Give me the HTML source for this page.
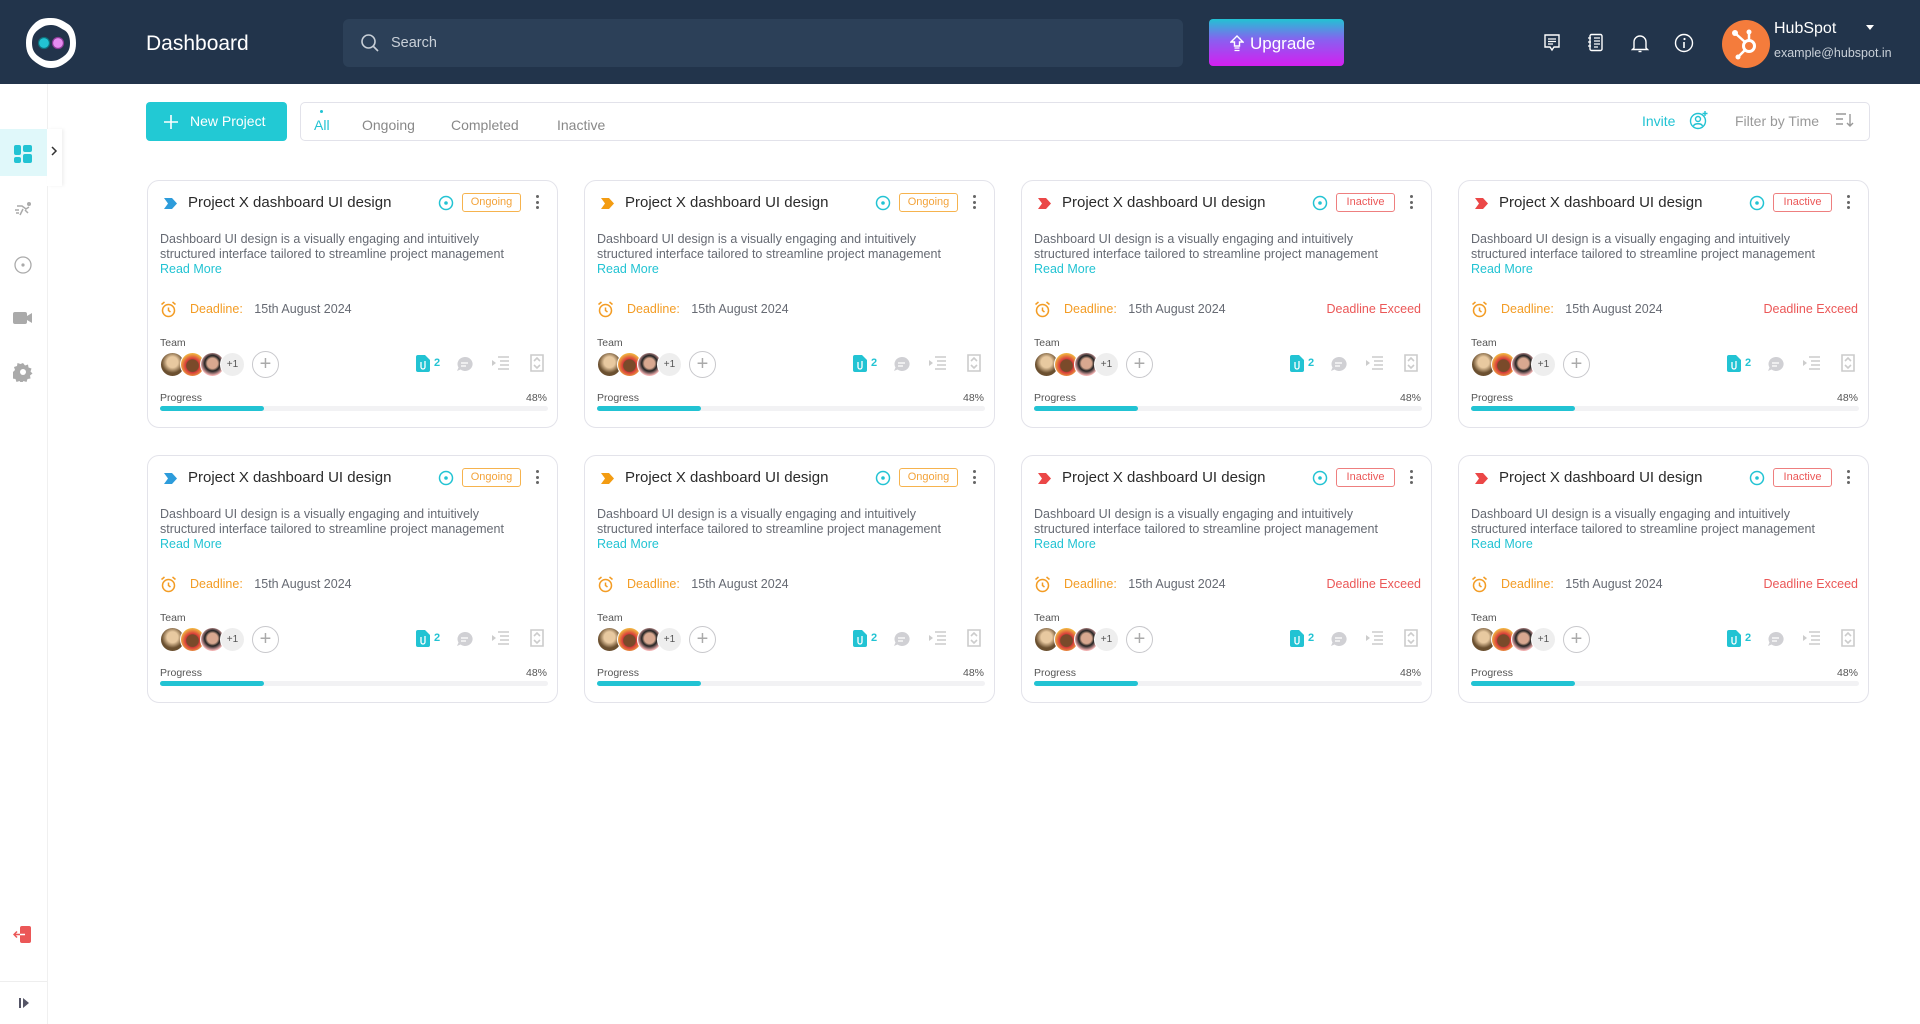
<!DOCTYPE html>
<html><head><meta charset="utf-8"><style>
*{box-sizing:border-box;margin:0;padding:0}
body{width:1920px;height:1024px;background:#fff;font-family:"Liberation Sans",sans-serif;position:relative;overflow:hidden;color:#333}
.hdr{position:absolute;left:0;top:0;width:1920px;height:84px;background:#22344b}
.abs{position:absolute}
.side{position:absolute;left:0;top:84px;width:48px;height:940px;background:#fff;border-right:1px solid #f0f0f0}
.card{position:absolute;width:411px;height:248px;border:1px solid #e3e3ea;border-radius:12px;background:#fff}
.card .t{position:absolute;left:40px;top:12px;font-size:15px;color:#2a2a2a;line-height:20px}
.card .chev{position:absolute;left:16px;top:17px}
.card .tg{position:absolute;left:290px;top:14px}
.badge{position:absolute;left:314px;top:12px;width:59px;height:19px;border:1px solid;border-radius:3px;font-size:11px;text-align:center;line-height:17px}
.og{border-color:#f6b34e;color:#f3a33a}
.in{border-color:#ee7f7f;color:#eb5757}
.keb{position:absolute;left:388px;top:14px;width:4px}
.keb i{display:block;width:3px;height:3px;border-radius:50%;background:#666;margin-bottom:2.5px}
.desc{position:absolute;left:12px;top:51px;font-size:12.5px;line-height:15px;color:#666a73;width:365px}
.rm{color:#22c3d3}
.dl{position:absolute;left:12px;top:119px;font-size:12.5px;line-height:18px;color:#666a73}
.dl b{font-weight:normal;color:#f39c24;margin-left:16px;margin-right:8px}
.ex{position:absolute;right:10px;top:119px;font-size:12.5px;line-height:18px;color:#eb5757}
.team{position:absolute;left:12px;top:156px;font-size:10.5px;color:#555}
.av{position:absolute;top:171px;width:25px;height:25px;border-radius:50%;border:1px solid #fff}
.plus{position:absolute;left:104px;top:170px;width:27px;height:27px;border-radius:50%;border:1px solid #c8c8cc;color:#aaa;font-size:20px;text-align:center;line-height:24px}
.pl{position:absolute;left:12px;top:211px;font-size:10.5px;color:#555}
.pc{position:absolute;right:10px;top:211px;font-size:10.5px;color:#555}
.bar{position:absolute;left:12px;top:225px;width:388px;height:5px;background:#f2f2f4;border-radius:3px}
.bar i{display:block;width:104px;height:5px;background:#22c3d3;border-radius:3px}
.ic{position:absolute;top:175px}
</style></head><body>
<div class="hdr">
 <svg class="abs" style="left:24px;top:16px" width="54" height="54" viewBox="0 0 54 54"><path d="M27 2c8 0 12 3 17 6s8 10 8 19-3 14-8 18-10 7-17 7-12-3-17-7-8-9-8-18 3-14 8-19 9-6 17-6z" fill="#fff"/><path d="M27 9c6 0 9 3 13 5s6 7 6 13-2 10-6 13-7 5-13 5-9-2-13-5-6-7-6-13 2-10 6-13 7-5 13-5z" fill="#22344b"/><circle cx="20" cy="27" r="5.5" fill="#22c3d3" stroke="#0f6f7b" stroke-width="1.2"/><circle cx="34" cy="27" r="5.5" fill="#e58cf0" stroke="#8a3a95" stroke-width="1.2"/></svg>
 <div class="abs" style="left:146px;top:32px;font-size:21px;color:#fff">Dashboard</div>
 <div class="abs" style="left:343px;top:19px;width:840px;height:48px;background:#2c4058;border-radius:6px"></div>
 <svg class="abs" style="left:360px;top:33px" width="20" height="20" viewBox="0 0 20 20"><circle cx="8.5" cy="8.5" r="6.5" fill="none" stroke="#c9d0d8" stroke-width="1.6"/><path d="M13.5 13.5l4.5 4.5" stroke="#c9d0d8" stroke-width="1.6"/></svg>
 <div class="abs" style="left:391px;top:35px;font-size:14.5px;color:#c9d0d8">Search</div>
 <div class="abs" style="left:1209px;top:19px;width:135px;height:47px;border-radius:4px;background:linear-gradient(#22c3d3,#8a5ff0 45%,#d41ff0)"></div>
 <svg class="abs" style="left:1230px;top:35px" width="14" height="17" viewBox="0 0 14 17"><path d="M7 1L1 7h3.5v4h5V7H13z" fill="none" stroke="#fff" stroke-width="1.4"/><path d="M4.5 13h5M4.5 15.5h5" stroke="#fff" stroke-width="1.2"/></svg>
 <div class="abs" style="left:1250px;top:34px;font-size:17px;color:#fff">Upgrade</div>
 <svg class="abs" style="left:1543px;top:33px" width="18" height="20" viewBox="0 0 18 20"><path d="M2 2h14v12h-5l-2 3-2-3H2z" fill="none" stroke="#fff" stroke-width="1.4"/><path d="M5 6h8M5 8.5h8M5 11h5" stroke="#fff" stroke-width="1.2"/></svg>
 <svg class="abs" style="left:1587px;top:33px" width="18" height="20" viewBox="0 0 18 20"><rect x="3" y="1.5" width="12" height="16" rx="1.5" fill="none" stroke="#fff" stroke-width="1.4"/><path d="M7 5h6M7 8h6M7 11h6M7 14h4M1 5h3M1 9h3M1 13h3" stroke="#fff" stroke-width="1.2"/></svg>
 <svg class="abs" style="left:1631px;top:33px" width="18" height="20" viewBox="0 0 18 20"><path d="M3 15V9a6 6 0 0 1 12 0v6l1.5 1.5h-15z" fill="none" stroke="#fff" stroke-width="1.4"/><path d="M7.5 18.5h3" stroke="#fff" stroke-width="1.4"/></svg>
 <svg class="abs" style="left:1674px;top:33px" width="20" height="20" viewBox="0 0 20 20"><circle cx="10" cy="10" r="8.5" fill="none" stroke="#fff" stroke-width="1.4"/><circle cx="10.5" cy="6" r="1.1" fill="#fff"/><path d="M10 9v6" stroke="#fff" stroke-width="1.6"/></svg>
 <svg class="abs" style="left:1721px;top:19px" width="50" height="50" viewBox="0 0 50 50"><circle cx="25" cy="25" r="24" fill="#f47c3c"/><circle cx="28" cy="27" r="5.5" fill="none" stroke="#fff" stroke-width="3"/><path d="M28 21.5V14M24 23l-9-8M24 31l-6 6" stroke="#fff" stroke-width="2.5"/><circle cx="28" cy="13" r="2.5" fill="#fff"/><circle cx="14" cy="14" r="3" fill="#fff"/><circle cx="17" cy="38" r="2.5" fill="#fff"/></svg>
 <div class="abs" style="left:1774px;top:20px;font-size:16px;color:#fff">HubSpot</div>
 <div class="abs" style="left:1866px;top:25px;width:0;height:0;border-left:4px solid transparent;border-right:4px solid transparent;border-top:5px solid #fff"></div>
 <div class="abs" style="left:1774px;top:46px;font-size:12.5px;color:#c9d0d8">example@hubspot.in</div>
</div>
<div class="side">
 <div class="abs" style="left:0;top:45px;width:47px;height:47px;background:#e0f8fa"></div>
 <div class="abs" style="left:47px;top:45px;width:15px;height:57px;background:#fff;box-shadow:2px 0 3px rgba(0,0,0,.06)"></div>
 <svg class="abs" style="left:50px;top:61px" width="8" height="12" viewBox="0 0 8 12"><path d="M2 2l4 4-4 4" fill="none" stroke="#333" stroke-width="1.5"/></svg>
 <svg class="abs" style="left:13px;top:60px" width="20" height="20" viewBox="0 0 20 20"><rect x="1" y="1" width="7" height="10" rx="2" fill="#22c3d3"/><rect x="10" y="1" width="9" height="7" rx="2" fill="#22c3d3"/><rect x="1" y="13" width="7" height="6" rx="2" fill="#22c3d3"/><rect x="10" y="10" width="9" height="9" rx="2" fill="#22c3d3"/></svg>
 <svg class="abs" style="left:14px;top:117px" width="20" height="16" viewBox="0 0 20 16"><circle cx="15" cy="3" r="2" fill="#aaa"/><path d="M3 5h5l4 3 3-2M9 8l-3 6M11 9l3 3M1 9h4M2 12h3" stroke="#aaa" stroke-width="1.5" fill="none"/></svg>
 <svg class="abs" style="left:13px;top:171px" width="20" height="20" viewBox="0 0 20 20"><circle cx="10" cy="10" r="8" fill="none" stroke="#aaa" stroke-width="1.3"/><circle cx="10" cy="10" r="1.6" fill="#aaa"/></svg>
 <svg class="abs" style="left:13px;top:227px" width="20" height="14" viewBox="0 0 20 14"><rect x="0" y="1" width="14" height="12" rx="2" fill="#aaa"/><path d="M14 5l5-3v10l-5-3z" fill="#aaa"/></svg>
 <svg class="abs" style="left:13px;top:278px" width="20" height="20" viewBox="0 0 20 20"><path d="M10 1l2 2.5 3-1 .5 3 3 1-1 3 2 2-2.5 2 .5 3-3 .5-1 3-3-1-2 2.5-2-2.5-3 1-1-3-3-.5.5-3L0 10l2-2-1-3 3-1 .5-3 3 1z" fill="#aaa"/><circle cx="10" cy="10" r="3" fill="#fff"/></svg>
 <svg class="abs" style="left:13px;top:842px" width="20" height="18" viewBox="0 0 20 18"><rect x="7" y="0" width="11" height="17" rx="2" fill="#eb5757"/><path d="M1 8.5h11M4 5.5l-3 3 3 3" stroke="#eb5757" stroke-width="1.5" fill="none"/><path d="M7 8.5h5" stroke="#fff" stroke-width="1.5"/></svg>
 <div class="abs" style="left:0;top:897px;width:47px;height:1px;background:#eee"></div>
 <svg class="abs" style="left:18px;top:913px" width="12" height="12" viewBox="0 0 12 12"><rect x="1" y="1" width="2" height="10" fill="#556"/><path d="M5 1l6 5-6 5z" fill="#556"/></svg>
</div>
<div class="abs" style="left:146px;top:102px;width:141px;height:39px;background:#22c9d4;border-radius:4px"></div>
<svg class="abs" style="left:163px;top:114px" width="16" height="16" viewBox="0 0 16 16"><path d="M8 1v14M1 8h14" stroke="#fff" stroke-width="1.6"/></svg>
<div class="abs" style="left:190px;top:113px;font-size:14px;color:#fff">New Project</div>
<div class="abs" style="left:300px;top:102px;width:1570px;height:39px;border:1px solid #e2e2ea;border-radius:5px"></div>
<div class="abs" style="left:320px;top:110px;width:3px;height:3px;border-radius:50%;background:#22c3d3"></div>
<div class="abs" style="left:314px;top:117px;font-size:14px;color:#22c3d3">All</div>
<div class="abs" style="left:362px;top:117px;font-size:14px;color:#888">Ongoing</div>
<div class="abs" style="left:451px;top:117px;font-size:14px;color:#888">Completed</div>
<div class="abs" style="left:557px;top:117px;font-size:14px;color:#888">Inactive</div>
<div class="abs" style="left:1642px;top:113px;font-size:14px;color:#22c3d3">Invite</div>
<svg class="abs" style="left:1689px;top:110px" width="20" height="20" viewBox="0 0 20 20"><circle cx="9" cy="11" r="7.5" fill="none" stroke="#22c3d3" stroke-width="1.4"/><circle cx="9" cy="9" r="2.5" fill="none" stroke="#22c3d3" stroke-width="1.4"/><path d="M4.5 16c1-3 8-3 9 0M16 1v5M13.5 3.5h5" stroke="#22c3d3" stroke-width="1.4" fill="none"/></svg>
<div class="abs" style="left:1735px;top:113px;font-size:14px;color:#999">Filter by Time</div>
<svg class="abs" style="left:1835px;top:112px" width="20" height="16" viewBox="0 0 20 16"><path d="M1 2h10M1 7h7M1 12h7M15 2v12M12 11l3 3 3-3" stroke="#999" stroke-width="1.4" fill="none"/></svg>

<div class="card" style="left:147px;top:180px">
<svg class="chev" width="14" height="11" viewBox="0 0 14 11"><path d="M0 0h8l5 5.5-5 5.5H0l4-5.5z" fill="#2d9cdb"/></svg>
<div class="t">Project X dashboard UI design</div>
<svg class="tg" width="16" height="16" viewBox="0 0 16 16"><circle cx="8" cy="8" r="6.5" fill="none" stroke="#22c3d3" stroke-width="1.5"/><circle cx="8" cy="8" r="1.8" fill="#22c3d3"/></svg>
<div class="badge og">Ongoing</div><div class="keb"><i></i><i></i><i></i></div>
<div class="desc">Dashboard UI design is a visually engaging and intuitively structured interface tailored to streamline project management<br><span class="rm">Read More</span></div>
<svg class="abs" style="left:12px;top:120px" width="17" height="17" viewBox="0 0 17 17"><circle cx="8.5" cy="9.5" r="6" fill="none" stroke="#f39c24" stroke-width="1.5"/><path d="M8.5 6.5v3l2 1.5M1.5 3.5l3-2.5M15.5 3.5l-3-2.5" stroke="#f39c24" stroke-width="1.5" fill="none"/></svg>
<div class="dl"><b style="margin-left:30px">Deadline:</b> 15th August 2024</div>
<div class="team">Team</div>
<div class="av" style="left:12px;background:radial-gradient(circle at 50% 40%,#e8c9a0 30%,#6b5030 60%)"></div>
<div class="av" style="left:32px;background:radial-gradient(circle at 50% 55%,#7a4a2a 35%,#d73a3a 40%,#f0b040 70%)"></div>
<div class="av" style="left:52px;background:radial-gradient(circle at 50% 45%,#d8a890 30%,#222 45%,#f0b0b0 70%)"></div>
<div class="av" style="left:72px;background:#eee;color:#555;font-size:10px;text-align:center;line-height:23px">+1</div>
<div class="plus">+</div>
<svg class="ic" style="left:268px;top:174px" width="14" height="17" viewBox="0 0 14 17"><path d="M0 2a2 2 0 0 1 2-2h7l5 5v10a2 2 0 0 1-2 2H2a2 2 0 0 1-2-2z" fill="#22c3d3"/><path d="M5 7v5a2 2 0 0 0 4 0V6" stroke="#fff" stroke-width="1.3" fill="none"/></svg>
<div class="abs" style="left:286px;top:176px;font-size:11px;color:#22c3d3;font-weight:bold">2</div>
<svg class="ic" style="left:308px" width="17" height="16" viewBox="0 0 17 16"><path d="M8.5 1a7.5 7 0 1 1-4 12.5L1 15l1.5-3.5A7.5 7 0 0 1 8.5 1z" fill="#d0d0d4"/><path d="M5 7h7M5 10h5" stroke="#fff" stroke-width="1.3"/></svg>
<svg class="ic" style="left:344px" width="18" height="14" viewBox="0 0 18 14"><path d="M0 4l4 3-4 3z" fill="#ccc"/><path d="M6 1h11M8 5h9M8 9h9M6 13h11" stroke="#ccc" stroke-width="1.6"/></svg>
<svg class="ic" style="left:382px;top:173px" width="14" height="18" viewBox="0 0 14 18"><path d="M1 1h12v16H1z" fill="none" stroke="#ccc" stroke-width="1.6"/><path d="M4 7l3-3 3 3M10 11l-3 3-3-3" stroke="#ccc" stroke-width="1.6" fill="none"/></svg>
<div class="pl">Progress</div><div class="pc">48%</div><div class="bar"><i></i></div>
</div>

<div class="card" style="left:584px;top:180px">
<svg class="chev" width="14" height="11" viewBox="0 0 14 11"><path d="M0 0h8l5 5.5-5 5.5H0l4-5.5z" fill="#f39c12"/></svg>
<div class="t">Project X dashboard UI design</div>
<svg class="tg" width="16" height="16" viewBox="0 0 16 16"><circle cx="8" cy="8" r="6.5" fill="none" stroke="#22c3d3" stroke-width="1.5"/><circle cx="8" cy="8" r="1.8" fill="#22c3d3"/></svg>
<div class="badge og">Ongoing</div><div class="keb"><i></i><i></i><i></i></div>
<div class="desc">Dashboard UI design is a visually engaging and intuitively structured interface tailored to streamline project management<br><span class="rm">Read More</span></div>
<svg class="abs" style="left:12px;top:120px" width="17" height="17" viewBox="0 0 17 17"><circle cx="8.5" cy="9.5" r="6" fill="none" stroke="#f39c24" stroke-width="1.5"/><path d="M8.5 6.5v3l2 1.5M1.5 3.5l3-2.5M15.5 3.5l-3-2.5" stroke="#f39c24" stroke-width="1.5" fill="none"/></svg>
<div class="dl"><b style="margin-left:30px">Deadline:</b> 15th August 2024</div>
<div class="team">Team</div>
<div class="av" style="left:12px;background:radial-gradient(circle at 50% 40%,#e8c9a0 30%,#6b5030 60%)"></div>
<div class="av" style="left:32px;background:radial-gradient(circle at 50% 55%,#7a4a2a 35%,#d73a3a 40%,#f0b040 70%)"></div>
<div class="av" style="left:52px;background:radial-gradient(circle at 50% 45%,#d8a890 30%,#222 45%,#f0b0b0 70%)"></div>
<div class="av" style="left:72px;background:#eee;color:#555;font-size:10px;text-align:center;line-height:23px">+1</div>
<div class="plus">+</div>
<svg class="ic" style="left:268px;top:174px" width="14" height="17" viewBox="0 0 14 17"><path d="M0 2a2 2 0 0 1 2-2h7l5 5v10a2 2 0 0 1-2 2H2a2 2 0 0 1-2-2z" fill="#22c3d3"/><path d="M5 7v5a2 2 0 0 0 4 0V6" stroke="#fff" stroke-width="1.3" fill="none"/></svg>
<div class="abs" style="left:286px;top:176px;font-size:11px;color:#22c3d3;font-weight:bold">2</div>
<svg class="ic" style="left:308px" width="17" height="16" viewBox="0 0 17 16"><path d="M8.5 1a7.5 7 0 1 1-4 12.5L1 15l1.5-3.5A7.5 7 0 0 1 8.5 1z" fill="#d0d0d4"/><path d="M5 7h7M5 10h5" stroke="#fff" stroke-width="1.3"/></svg>
<svg class="ic" style="left:344px" width="18" height="14" viewBox="0 0 18 14"><path d="M0 4l4 3-4 3z" fill="#ccc"/><path d="M6 1h11M8 5h9M8 9h9M6 13h11" stroke="#ccc" stroke-width="1.6"/></svg>
<svg class="ic" style="left:382px;top:173px" width="14" height="18" viewBox="0 0 14 18"><path d="M1 1h12v16H1z" fill="none" stroke="#ccc" stroke-width="1.6"/><path d="M4 7l3-3 3 3M10 11l-3 3-3-3" stroke="#ccc" stroke-width="1.6" fill="none"/></svg>
<div class="pl">Progress</div><div class="pc">48%</div><div class="bar"><i></i></div>
</div>

<div class="card" style="left:1021px;top:180px">
<svg class="chev" width="14" height="11" viewBox="0 0 14 11"><path d="M0 0h8l5 5.5-5 5.5H0l4-5.5z" fill="#eb4747"/></svg>
<div class="t">Project X dashboard UI design</div>
<svg class="tg" width="16" height="16" viewBox="0 0 16 16"><circle cx="8" cy="8" r="6.5" fill="none" stroke="#22c3d3" stroke-width="1.5"/><circle cx="8" cy="8" r="1.8" fill="#22c3d3"/></svg>
<div class="badge in">Inactive</div><div class="keb"><i></i><i></i><i></i></div>
<div class="desc">Dashboard UI design is a visually engaging and intuitively structured interface tailored to streamline project management<br><span class="rm">Read More</span></div>
<svg class="abs" style="left:12px;top:120px" width="17" height="17" viewBox="0 0 17 17"><circle cx="8.5" cy="9.5" r="6" fill="none" stroke="#f39c24" stroke-width="1.5"/><path d="M8.5 6.5v3l2 1.5M1.5 3.5l3-2.5M15.5 3.5l-3-2.5" stroke="#f39c24" stroke-width="1.5" fill="none"/></svg>
<div class="dl"><b style="margin-left:30px">Deadline:</b> 15th August 2024</div>
<div class="ex">Deadline Exceed</div>
<div class="team">Team</div>
<div class="av" style="left:12px;background:radial-gradient(circle at 50% 40%,#e8c9a0 30%,#6b5030 60%)"></div>
<div class="av" style="left:32px;background:radial-gradient(circle at 50% 55%,#7a4a2a 35%,#d73a3a 40%,#f0b040 70%)"></div>
<div class="av" style="left:52px;background:radial-gradient(circle at 50% 45%,#d8a890 30%,#222 45%,#f0b0b0 70%)"></div>
<div class="av" style="left:72px;background:#eee;color:#555;font-size:10px;text-align:center;line-height:23px">+1</div>
<div class="plus">+</div>
<svg class="ic" style="left:268px;top:174px" width="14" height="17" viewBox="0 0 14 17"><path d="M0 2a2 2 0 0 1 2-2h7l5 5v10a2 2 0 0 1-2 2H2a2 2 0 0 1-2-2z" fill="#22c3d3"/><path d="M5 7v5a2 2 0 0 0 4 0V6" stroke="#fff" stroke-width="1.3" fill="none"/></svg>
<div class="abs" style="left:286px;top:176px;font-size:11px;color:#22c3d3;font-weight:bold">2</div>
<svg class="ic" style="left:308px" width="17" height="16" viewBox="0 0 17 16"><path d="M8.5 1a7.5 7 0 1 1-4 12.5L1 15l1.5-3.5A7.5 7 0 0 1 8.5 1z" fill="#d0d0d4"/><path d="M5 7h7M5 10h5" stroke="#fff" stroke-width="1.3"/></svg>
<svg class="ic" style="left:344px" width="18" height="14" viewBox="0 0 18 14"><path d="M0 4l4 3-4 3z" fill="#ccc"/><path d="M6 1h11M8 5h9M8 9h9M6 13h11" stroke="#ccc" stroke-width="1.6"/></svg>
<svg class="ic" style="left:382px;top:173px" width="14" height="18" viewBox="0 0 14 18"><path d="M1 1h12v16H1z" fill="none" stroke="#ccc" stroke-width="1.6"/><path d="M4 7l3-3 3 3M10 11l-3 3-3-3" stroke="#ccc" stroke-width="1.6" fill="none"/></svg>
<div class="pl">Progress</div><div class="pc">48%</div><div class="bar"><i></i></div>
</div>

<div class="card" style="left:1458px;top:180px">
<svg class="chev" width="14" height="11" viewBox="0 0 14 11"><path d="M0 0h8l5 5.5-5 5.5H0l4-5.5z" fill="#eb4747"/></svg>
<div class="t">Project X dashboard UI design</div>
<svg class="tg" width="16" height="16" viewBox="0 0 16 16"><circle cx="8" cy="8" r="6.5" fill="none" stroke="#22c3d3" stroke-width="1.5"/><circle cx="8" cy="8" r="1.8" fill="#22c3d3"/></svg>
<div class="badge in">Inactive</div><div class="keb"><i></i><i></i><i></i></div>
<div class="desc">Dashboard UI design is a visually engaging and intuitively structured interface tailored to streamline project management<br><span class="rm">Read More</span></div>
<svg class="abs" style="left:12px;top:120px" width="17" height="17" viewBox="0 0 17 17"><circle cx="8.5" cy="9.5" r="6" fill="none" stroke="#f39c24" stroke-width="1.5"/><path d="M8.5 6.5v3l2 1.5M1.5 3.5l3-2.5M15.5 3.5l-3-2.5" stroke="#f39c24" stroke-width="1.5" fill="none"/></svg>
<div class="dl"><b style="margin-left:30px">Deadline:</b> 15th August 2024</div>
<div class="ex">Deadline Exceed</div>
<div class="team">Team</div>
<div class="av" style="left:12px;background:radial-gradient(circle at 50% 40%,#e8c9a0 30%,#6b5030 60%)"></div>
<div class="av" style="left:32px;background:radial-gradient(circle at 50% 55%,#7a4a2a 35%,#d73a3a 40%,#f0b040 70%)"></div>
<div class="av" style="left:52px;background:radial-gradient(circle at 50% 45%,#d8a890 30%,#222 45%,#f0b0b0 70%)"></div>
<div class="av" style="left:72px;background:#eee;color:#555;font-size:10px;text-align:center;line-height:23px">+1</div>
<div class="plus">+</div>
<svg class="ic" style="left:268px;top:174px" width="14" height="17" viewBox="0 0 14 17"><path d="M0 2a2 2 0 0 1 2-2h7l5 5v10a2 2 0 0 1-2 2H2a2 2 0 0 1-2-2z" fill="#22c3d3"/><path d="M5 7v5a2 2 0 0 0 4 0V6" stroke="#fff" stroke-width="1.3" fill="none"/></svg>
<div class="abs" style="left:286px;top:176px;font-size:11px;color:#22c3d3;font-weight:bold">2</div>
<svg class="ic" style="left:308px" width="17" height="16" viewBox="0 0 17 16"><path d="M8.5 1a7.5 7 0 1 1-4 12.5L1 15l1.5-3.5A7.5 7 0 0 1 8.5 1z" fill="#d0d0d4"/><path d="M5 7h7M5 10h5" stroke="#fff" stroke-width="1.3"/></svg>
<svg class="ic" style="left:344px" width="18" height="14" viewBox="0 0 18 14"><path d="M0 4l4 3-4 3z" fill="#ccc"/><path d="M6 1h11M8 5h9M8 9h9M6 13h11" stroke="#ccc" stroke-width="1.6"/></svg>
<svg class="ic" style="left:382px;top:173px" width="14" height="18" viewBox="0 0 14 18"><path d="M1 1h12v16H1z" fill="none" stroke="#ccc" stroke-width="1.6"/><path d="M4 7l3-3 3 3M10 11l-3 3-3-3" stroke="#ccc" stroke-width="1.6" fill="none"/></svg>
<div class="pl">Progress</div><div class="pc">48%</div><div class="bar"><i></i></div>
</div>

<div class="card" style="left:147px;top:455px">
<svg class="chev" width="14" height="11" viewBox="0 0 14 11"><path d="M0 0h8l5 5.5-5 5.5H0l4-5.5z" fill="#2d9cdb"/></svg>
<div class="t">Project X dashboard UI design</div>
<svg class="tg" width="16" height="16" viewBox="0 0 16 16"><circle cx="8" cy="8" r="6.5" fill="none" stroke="#22c3d3" stroke-width="1.5"/><circle cx="8" cy="8" r="1.8" fill="#22c3d3"/></svg>
<div class="badge og">Ongoing</div><div class="keb"><i></i><i></i><i></i></div>
<div class="desc">Dashboard UI design is a visually engaging and intuitively structured interface tailored to streamline project management<br><span class="rm">Read More</span></div>
<svg class="abs" style="left:12px;top:120px" width="17" height="17" viewBox="0 0 17 17"><circle cx="8.5" cy="9.5" r="6" fill="none" stroke="#f39c24" stroke-width="1.5"/><path d="M8.5 6.5v3l2 1.5M1.5 3.5l3-2.5M15.5 3.5l-3-2.5" stroke="#f39c24" stroke-width="1.5" fill="none"/></svg>
<div class="dl"><b style="margin-left:30px">Deadline:</b> 15th August 2024</div>
<div class="team">Team</div>
<div class="av" style="left:12px;background:radial-gradient(circle at 50% 40%,#e8c9a0 30%,#6b5030 60%)"></div>
<div class="av" style="left:32px;background:radial-gradient(circle at 50% 55%,#7a4a2a 35%,#d73a3a 40%,#f0b040 70%)"></div>
<div class="av" style="left:52px;background:radial-gradient(circle at 50% 45%,#d8a890 30%,#222 45%,#f0b0b0 70%)"></div>
<div class="av" style="left:72px;background:#eee;color:#555;font-size:10px;text-align:center;line-height:23px">+1</div>
<div class="plus">+</div>
<svg class="ic" style="left:268px;top:174px" width="14" height="17" viewBox="0 0 14 17"><path d="M0 2a2 2 0 0 1 2-2h7l5 5v10a2 2 0 0 1-2 2H2a2 2 0 0 1-2-2z" fill="#22c3d3"/><path d="M5 7v5a2 2 0 0 0 4 0V6" stroke="#fff" stroke-width="1.3" fill="none"/></svg>
<div class="abs" style="left:286px;top:176px;font-size:11px;color:#22c3d3;font-weight:bold">2</div>
<svg class="ic" style="left:308px" width="17" height="16" viewBox="0 0 17 16"><path d="M8.5 1a7.5 7 0 1 1-4 12.5L1 15l1.5-3.5A7.5 7 0 0 1 8.5 1z" fill="#d0d0d4"/><path d="M5 7h7M5 10h5" stroke="#fff" stroke-width="1.3"/></svg>
<svg class="ic" style="left:344px" width="18" height="14" viewBox="0 0 18 14"><path d="M0 4l4 3-4 3z" fill="#ccc"/><path d="M6 1h11M8 5h9M8 9h9M6 13h11" stroke="#ccc" stroke-width="1.6"/></svg>
<svg class="ic" style="left:382px;top:173px" width="14" height="18" viewBox="0 0 14 18"><path d="M1 1h12v16H1z" fill="none" stroke="#ccc" stroke-width="1.6"/><path d="M4 7l3-3 3 3M10 11l-3 3-3-3" stroke="#ccc" stroke-width="1.6" fill="none"/></svg>
<div class="pl">Progress</div><div class="pc">48%</div><div class="bar"><i></i></div>
</div>

<div class="card" style="left:584px;top:455px">
<svg class="chev" width="14" height="11" viewBox="0 0 14 11"><path d="M0 0h8l5 5.5-5 5.5H0l4-5.5z" fill="#f39c12"/></svg>
<div class="t">Project X dashboard UI design</div>
<svg class="tg" width="16" height="16" viewBox="0 0 16 16"><circle cx="8" cy="8" r="6.5" fill="none" stroke="#22c3d3" stroke-width="1.5"/><circle cx="8" cy="8" r="1.8" fill="#22c3d3"/></svg>
<div class="badge og">Ongoing</div><div class="keb"><i></i><i></i><i></i></div>
<div class="desc">Dashboard UI design is a visually engaging and intuitively structured interface tailored to streamline project management<br><span class="rm">Read More</span></div>
<svg class="abs" style="left:12px;top:120px" width="17" height="17" viewBox="0 0 17 17"><circle cx="8.5" cy="9.5" r="6" fill="none" stroke="#f39c24" stroke-width="1.5"/><path d="M8.5 6.5v3l2 1.5M1.5 3.5l3-2.5M15.5 3.5l-3-2.5" stroke="#f39c24" stroke-width="1.5" fill="none"/></svg>
<div class="dl"><b style="margin-left:30px">Deadline:</b> 15th August 2024</div>
<div class="team">Team</div>
<div class="av" style="left:12px;background:radial-gradient(circle at 50% 40%,#e8c9a0 30%,#6b5030 60%)"></div>
<div class="av" style="left:32px;background:radial-gradient(circle at 50% 55%,#7a4a2a 35%,#d73a3a 40%,#f0b040 70%)"></div>
<div class="av" style="left:52px;background:radial-gradient(circle at 50% 45%,#d8a890 30%,#222 45%,#f0b0b0 70%)"></div>
<div class="av" style="left:72px;background:#eee;color:#555;font-size:10px;text-align:center;line-height:23px">+1</div>
<div class="plus">+</div>
<svg class="ic" style="left:268px;top:174px" width="14" height="17" viewBox="0 0 14 17"><path d="M0 2a2 2 0 0 1 2-2h7l5 5v10a2 2 0 0 1-2 2H2a2 2 0 0 1-2-2z" fill="#22c3d3"/><path d="M5 7v5a2 2 0 0 0 4 0V6" stroke="#fff" stroke-width="1.3" fill="none"/></svg>
<div class="abs" style="left:286px;top:176px;font-size:11px;color:#22c3d3;font-weight:bold">2</div>
<svg class="ic" style="left:308px" width="17" height="16" viewBox="0 0 17 16"><path d="M8.5 1a7.5 7 0 1 1-4 12.5L1 15l1.5-3.5A7.5 7 0 0 1 8.5 1z" fill="#d0d0d4"/><path d="M5 7h7M5 10h5" stroke="#fff" stroke-width="1.3"/></svg>
<svg class="ic" style="left:344px" width="18" height="14" viewBox="0 0 18 14"><path d="M0 4l4 3-4 3z" fill="#ccc"/><path d="M6 1h11M8 5h9M8 9h9M6 13h11" stroke="#ccc" stroke-width="1.6"/></svg>
<svg class="ic" style="left:382px;top:173px" width="14" height="18" viewBox="0 0 14 18"><path d="M1 1h12v16H1z" fill="none" stroke="#ccc" stroke-width="1.6"/><path d="M4 7l3-3 3 3M10 11l-3 3-3-3" stroke="#ccc" stroke-width="1.6" fill="none"/></svg>
<div class="pl">Progress</div><div class="pc">48%</div><div class="bar"><i></i></div>
</div>

<div class="card" style="left:1021px;top:455px">
<svg class="chev" width="14" height="11" viewBox="0 0 14 11"><path d="M0 0h8l5 5.5-5 5.5H0l4-5.5z" fill="#eb4747"/></svg>
<div class="t">Project X dashboard UI design</div>
<svg class="tg" width="16" height="16" viewBox="0 0 16 16"><circle cx="8" cy="8" r="6.5" fill="none" stroke="#22c3d3" stroke-width="1.5"/><circle cx="8" cy="8" r="1.8" fill="#22c3d3"/></svg>
<div class="badge in">Inactive</div><div class="keb"><i></i><i></i><i></i></div>
<div class="desc">Dashboard UI design is a visually engaging and intuitively structured interface tailored to streamline project management<br><span class="rm">Read More</span></div>
<svg class="abs" style="left:12px;top:120px" width="17" height="17" viewBox="0 0 17 17"><circle cx="8.5" cy="9.5" r="6" fill="none" stroke="#f39c24" stroke-width="1.5"/><path d="M8.5 6.5v3l2 1.5M1.5 3.5l3-2.5M15.5 3.5l-3-2.5" stroke="#f39c24" stroke-width="1.5" fill="none"/></svg>
<div class="dl"><b style="margin-left:30px">Deadline:</b> 15th August 2024</div>
<div class="ex">Deadline Exceed</div>
<div class="team">Team</div>
<div class="av" style="left:12px;background:radial-gradient(circle at 50% 40%,#e8c9a0 30%,#6b5030 60%)"></div>
<div class="av" style="left:32px;background:radial-gradient(circle at 50% 55%,#7a4a2a 35%,#d73a3a 40%,#f0b040 70%)"></div>
<div class="av" style="left:52px;background:radial-gradient(circle at 50% 45%,#d8a890 30%,#222 45%,#f0b0b0 70%)"></div>
<div class="av" style="left:72px;background:#eee;color:#555;font-size:10px;text-align:center;line-height:23px">+1</div>
<div class="plus">+</div>
<svg class="ic" style="left:268px;top:174px" width="14" height="17" viewBox="0 0 14 17"><path d="M0 2a2 2 0 0 1 2-2h7l5 5v10a2 2 0 0 1-2 2H2a2 2 0 0 1-2-2z" fill="#22c3d3"/><path d="M5 7v5a2 2 0 0 0 4 0V6" stroke="#fff" stroke-width="1.3" fill="none"/></svg>
<div class="abs" style="left:286px;top:176px;font-size:11px;color:#22c3d3;font-weight:bold">2</div>
<svg class="ic" style="left:308px" width="17" height="16" viewBox="0 0 17 16"><path d="M8.5 1a7.5 7 0 1 1-4 12.5L1 15l1.5-3.5A7.5 7 0 0 1 8.5 1z" fill="#d0d0d4"/><path d="M5 7h7M5 10h5" stroke="#fff" stroke-width="1.3"/></svg>
<svg class="ic" style="left:344px" width="18" height="14" viewBox="0 0 18 14"><path d="M0 4l4 3-4 3z" fill="#ccc"/><path d="M6 1h11M8 5h9M8 9h9M6 13h11" stroke="#ccc" stroke-width="1.6"/></svg>
<svg class="ic" style="left:382px;top:173px" width="14" height="18" viewBox="0 0 14 18"><path d="M1 1h12v16H1z" fill="none" stroke="#ccc" stroke-width="1.6"/><path d="M4 7l3-3 3 3M10 11l-3 3-3-3" stroke="#ccc" stroke-width="1.6" fill="none"/></svg>
<div class="pl">Progress</div><div class="pc">48%</div><div class="bar"><i></i></div>
</div>

<div class="card" style="left:1458px;top:455px">
<svg class="chev" width="14" height="11" viewBox="0 0 14 11"><path d="M0 0h8l5 5.5-5 5.5H0l4-5.5z" fill="#eb4747"/></svg>
<div class="t">Project X dashboard UI design</div>
<svg class="tg" width="16" height="16" viewBox="0 0 16 16"><circle cx="8" cy="8" r="6.5" fill="none" stroke="#22c3d3" stroke-width="1.5"/><circle cx="8" cy="8" r="1.8" fill="#22c3d3"/></svg>
<div class="badge in">Inactive</div><div class="keb"><i></i><i></i><i></i></div>
<div class="desc">Dashboard UI design is a visually engaging and intuitively structured interface tailored to streamline project management<br><span class="rm">Read More</span></div>
<svg class="abs" style="left:12px;top:120px" width="17" height="17" viewBox="0 0 17 17"><circle cx="8.5" cy="9.5" r="6" fill="none" stroke="#f39c24" stroke-width="1.5"/><path d="M8.5 6.5v3l2 1.5M1.5 3.5l3-2.5M15.5 3.5l-3-2.5" stroke="#f39c24" stroke-width="1.5" fill="none"/></svg>
<div class="dl"><b style="margin-left:30px">Deadline:</b> 15th August 2024</div>
<div class="ex">Deadline Exceed</div>
<div class="team">Team</div>
<div class="av" style="left:12px;background:radial-gradient(circle at 50% 40%,#e8c9a0 30%,#6b5030 60%)"></div>
<div class="av" style="left:32px;background:radial-gradient(circle at 50% 55%,#7a4a2a 35%,#d73a3a 40%,#f0b040 70%)"></div>
<div class="av" style="left:52px;background:radial-gradient(circle at 50% 45%,#d8a890 30%,#222 45%,#f0b0b0 70%)"></div>
<div class="av" style="left:72px;background:#eee;color:#555;font-size:10px;text-align:center;line-height:23px">+1</div>
<div class="plus">+</div>
<svg class="ic" style="left:268px;top:174px" width="14" height="17" viewBox="0 0 14 17"><path d="M0 2a2 2 0 0 1 2-2h7l5 5v10a2 2 0 0 1-2 2H2a2 2 0 0 1-2-2z" fill="#22c3d3"/><path d="M5 7v5a2 2 0 0 0 4 0V6" stroke="#fff" stroke-width="1.3" fill="none"/></svg>
<div class="abs" style="left:286px;top:176px;font-size:11px;color:#22c3d3;font-weight:bold">2</div>
<svg class="ic" style="left:308px" width="17" height="16" viewBox="0 0 17 16"><path d="M8.5 1a7.5 7 0 1 1-4 12.5L1 15l1.5-3.5A7.5 7 0 0 1 8.5 1z" fill="#d0d0d4"/><path d="M5 7h7M5 10h5" stroke="#fff" stroke-width="1.3"/></svg>
<svg class="ic" style="left:344px" width="18" height="14" viewBox="0 0 18 14"><path d="M0 4l4 3-4 3z" fill="#ccc"/><path d="M6 1h11M8 5h9M8 9h9M6 13h11" stroke="#ccc" stroke-width="1.6"/></svg>
<svg class="ic" style="left:382px;top:173px" width="14" height="18" viewBox="0 0 14 18"><path d="M1 1h12v16H1z" fill="none" stroke="#ccc" stroke-width="1.6"/><path d="M4 7l3-3 3 3M10 11l-3 3-3-3" stroke="#ccc" stroke-width="1.6" fill="none"/></svg>
<div class="pl">Progress</div><div class="pc">48%</div><div class="bar"><i></i></div>
</div>
</body></html>
